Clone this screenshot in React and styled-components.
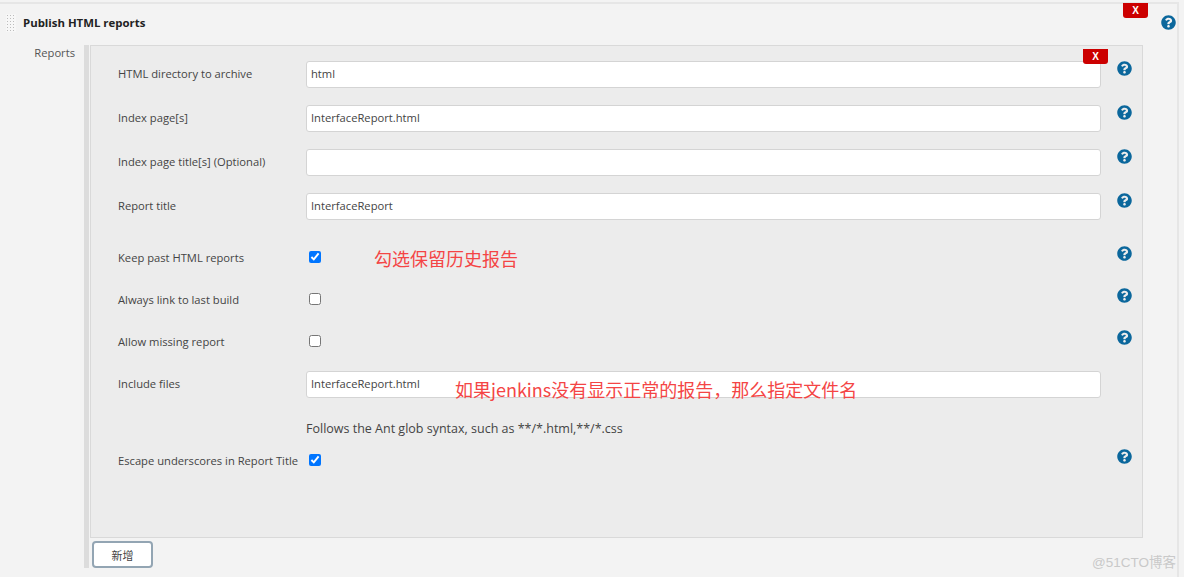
import React from "react";
import styled, { createGlobalStyle } from "styled-components";
import { FaQuestionCircle } from "react-icons/fa";

const GlobalStyle = createGlobalStyle`
  html, body {
    margin: 0;
    padding: 0;
    background: #f3f3f3;
  }
  * {
    box-sizing: border-box;
  }
`;

const FONT = `"Open Sans", "Noto Sans CJK SC", sans-serif`;

const StPage = styled.div`
  position: relative;
  width: 1184px;
  height: 577px;
  overflow: hidden;
  padding-top: 2px;
  background: #f3f3f3;
  font-family: ${FONT};
  font-size: 11.2px;
  color: #444;
`;

const StSection = styled.section`
  position: relative;
  width: 1179px;
  height: 575px;
  border-top: 2px solid #e6e6e6;
  border-right: 2px solid #e6e6e6;
`;

const StHeader = styled.header`
  display: flex;
  align-items: center;
  height: 41px;
  padding: 0 0 4px 6px;
`;

const StHandle = styled.div`
  width: 10px;
  height: 18px;
  margin-right: 7px;
  background-color: #f7f7f7;
  background-image: radial-gradient(#bcbcbc 0.7px, transparent 0.8px);
  background-size: 3px 3px;
`;

const StTitle = styled.h2`
  margin: 0;
  font-size: 11.4px;
  font-weight: 700;
  color: #222;
`;

const StBody = styled.div`
  display: flex;
`;

const StSideLabel = styled.div`
  width: 84px;
  padding: 0 9px 0 0;
  text-align: right;
  color: #555;
`;

const StRepeatable = styled.div`
  width: 1059px;
  height: 523px;
  padding-left: 1px;
  border-left: 5px solid #dcdcdc;
`;

const StPanel = styled.div`
  position: relative;
  width: 1053px;
  height: 493px;
  padding: 6px 0 0 27px;
  background: #ececec;
  border: 1px solid #d9d9d9;
`;

const StRow = styled.div`
  display: grid;
  grid-template-columns: 188px 795px 46px;
  align-items: center;
  height: ${(props) => props.$height}px;
  margin-top: ${(props) => props.$top || 0}px;
`;

const StLabel = styled.label`
  padding-bottom: ${(props) => props.$lift || 0}px;
  color: #444;
  white-space: nowrap;
`;

const StField = styled.div`
  position: relative;
  display: flex;
  align-items: center;
`;

const StInput = styled.input`
  width: 795px;
  height: 27px;
  padding: 0 4px 2px;
  background: #fff;
  border: 1px solid #d4d4d4;
  border-radius: 3px;
  outline: none;
  font-family: ${FONT};
  font-size: 11.2px;
  color: #444;
`;

const StCheckbox = styled.input.attrs({ type: "checkbox" })`
  width: 12px;
  height: 12px;
  margin: 0 0 0 3px;
  accent-color: #0075ff;
`;

const StHelp = styled(FaQuestionCircle)`
  justify-self: center;
  width: 15px;
  height: 15px;
  margin-bottom: ${(props) => props.$lift}px;
  color: #0b679c;
`;

const StHint = styled.div`
  grid-column: 2 / 4;
  font-size: 12.5px;
  color: #444;
  white-space: nowrap;
`;

const StNote = styled.span`
  font-family: "Noto Sans CJK SC", sans-serif;
  font-size: 18px;
  line-height: 24px;
  color: #f44545;
  white-space: nowrap;
`;

const StKeepNote = styled(StNote)`
  margin: 2px 0 0 53px;
`;

const StFileNote = styled(StNote)`
  position: absolute;
  left: 149px;
  top: 6px;
`;

const StDelete = styled.button`
  position: absolute;
  z-index: 1;
  top: ${(props) => props.$top}px;
  right: ${(props) => props.$right}px;
  width: 25px;
  height: 15px;
  padding: 0;
  background: #cc0000;
  border: none;
  border-radius: 0 0 3px 3px;
  font-family: "Liberation Sans", sans-serif;
  font-size: 10px;
  font-weight: 700;
  line-height: 15px;
  color: #fff;
`;

const StOuterHelp = styled(FaQuestionCircle)`
  position: absolute;
  top: 11px;
  left: 1161px;
  width: 15px;
  height: 15px;
  color: #0b679c;
`;

const StAddBtn = styled.button`
  display: block;
  width: 61px;
  height: 27px;
  margin: 3px 0 0 2px;
  padding: 0;
  background: #fff;
  border: 2px solid #93a5b3;
  border-radius: 4px;
  font-family: "Noto Sans CJK SC", sans-serif;
  font-size: 11px;
  color: #444;
`;

const StWatermark = styled.div`
  position: absolute;
  right: 8px;
  bottom: 6px;
  font-family: "Liberation Sans", "Noto Sans CJK SC", sans-serif;
  font-size: 13.5px;
  color: #c9c9c9;
`;

const TextRow = ({ label, value, height = 44, children }) => (
  <StRow $height={height}>
    <StLabel $lift={2}>{label}</StLabel>
    <StField>
      <StInput readOnly value={value} />
      {children}
    </StField>
    <StHelp $lift={12} />
  </StRow>
);

const CheckRow = ({ label, checked, top, children }) => (
  <StRow $height={42} $top={top}>
    <StLabel>{label}</StLabel>
    <StField>
      <StCheckbox readOnly checked={checked} />
      {children}
    </StField>
    <StHelp $lift={8} />
  </StRow>
);

const App = () => {
  return (
    <StPage>
      <GlobalStyle />
      <StSection>
        <StHeader>
          <StHandle />
          <StTitle>Publish HTML reports</StTitle>
        </StHeader>
        <StDelete $top={-1} $right={29}>
          X
        </StDelete>
        <StOuterHelp />
        <StBody>
          <StSideLabel>Reports</StSideLabel>
          <StRepeatable>
            <StPanel>
              <StDelete $top={3} $right={34}>
                X
              </StDelete>
              <TextRow label="HTML directory to archive" value="html" />
              <TextRow label="Index page[s]" value="InterfaceReport.html" />
              <TextRow label="Index page title[s] (Optional)" value="" />
              <TextRow label="Report title" value="InterfaceReport" />
              <CheckRow label="Keep past HTML reports" checked top={8}>
                <StKeepNote>勾选保留历史报告</StKeepNote>
              </CheckRow>
              <CheckRow label="Always link to last build" checked={false} />
              <CheckRow label="Allow missing report" checked={false} />
              <StRow $height={44}>
                <StLabel $lift={2}>Include files</StLabel>
                <StField>
                  <StInput readOnly value="InterfaceReport.html" />
                  <StFileNote>如果jenkins没有显示正常的报告，那么指定文件名</StFileNote>
                </StField>
              </StRow>
              <StRow $height={22} $top={11}>
                <span />
                <StHint>Follows the Ant glob syntax, such as **/*.html,**/*.css</StHint>
              </StRow>
              <CheckRow label="Escape underscores in Report Title" checked />
            </StPanel>
            <StAddBtn>新增</StAddBtn>
          </StRepeatable>
        </StBody>
      </StSection>
      <StWatermark>@51CTO博客</StWatermark>
    </StPage>
  );
};

export default App;
